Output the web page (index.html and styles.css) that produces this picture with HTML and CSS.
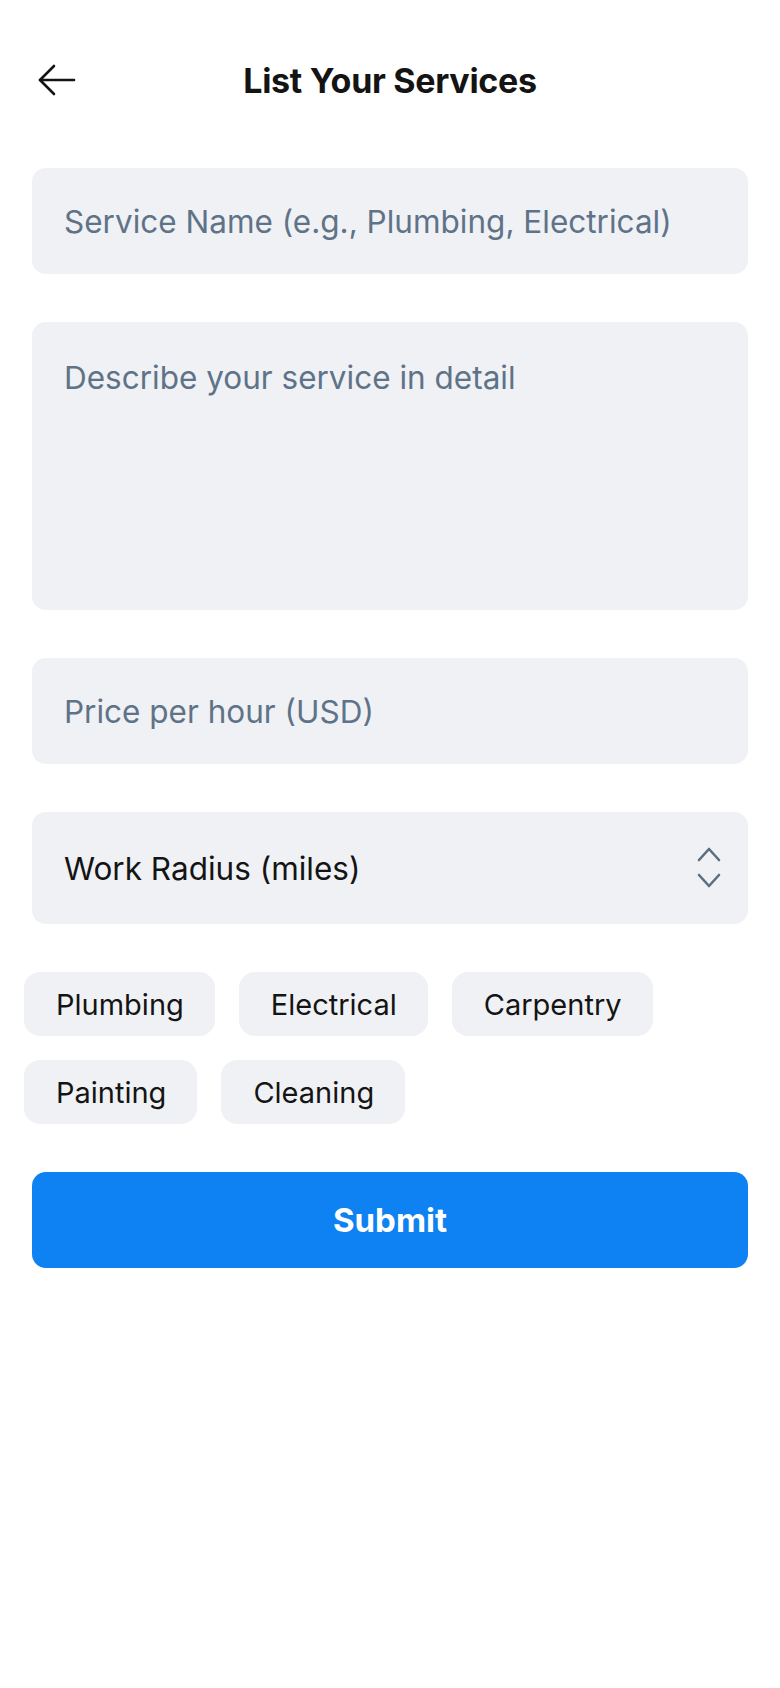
FILE: index.html
```html
<!DOCTYPE html>
<html lang="en">
<head>
<meta charset="utf-8">
<title>List Your Services</title>
<link rel="stylesheet" href="styles.css">
</head>
<body>
<div class="screen">
  <header class="header">
    <button class="back" aria-label="Back">
      <svg width="38" height="32" viewBox="0 0 38 32" fill="none" stroke="#141414" stroke-width="2.6" stroke-linecap="round" stroke-linejoin="round">
        <path d="M36 16H2"/>
        <path d="M16 2L2 16l14 14"/>
      </svg>
    </button>
    <h1 class="title">List Your Services</h1>
    <span class="spacer"></span>
  </header>

  <form class="form">
    <div class="field"><span class="placeholder">Service Name (e.g., Plumbing, Electrical)</span></div>
    <div class="field area"><span class="placeholder">Describe your service in detail</span></div>
    <div class="field"><span class="placeholder">Price per hour (USD)</span></div>
    <div class="field select">
      <span class="value">Work Radius (miles)</span>
      <svg class="chev" width="24" height="44" viewBox="0 0 24 44" fill="none" stroke="#5b6f84" stroke-width="2.6" stroke-linecap="round" stroke-linejoin="round">
        <path d="M2 14L12 3l10 11"/>
        <path d="M2 29l10 11 10-11"/>
      </svg>
    </div>

    <div class="chips">
      <span class="chip">Plumbing</span>
      <span class="chip">Electrical</span>
      <span class="chip">Carpentry</span>
      <span class="chip">Painting</span>
      <span class="chip">Cleaning</span>
    </div>

    <button type="button" class="submit">Submit</button>
  </form>
</div>
</body>
</html>
```

FILE: styles.css
```css
* { box-sizing: border-box; }
html, body { margin: 0; padding: 0; background: #ffffff; }
body {
  font-family: Inter, "Noto Sans", "Liberation Sans", sans-serif;
  color: #141414;
}
.screen {
  width: 780px;
  min-height: 1688px;
  padding: 0 32px;
}
.header {
  height: 160px;
  display: flex;
  align-items: center;
  justify-content: space-between;
}
.back {
  width: 42px;
  height: 40px;
  border: 0;
  background: none;
  padding: 0;
  margin-left: 6px;
  display: flex;
  align-items: center;
}
.spacer { width: 48px; }
.title {
  margin: 0;
  font-size: 34px;
  font-weight: 700;
  letter-spacing: -0.3px;
  color: #141414;
}
.form {
  display: flex;
  flex-direction: column;
  gap: 48px;
  margin-top: 8px;
}
.field {
  background: #f0f1f5;
  border-radius: 14px;
  height: 106px;
  padding: 0 32px;
  display: flex;
  align-items: center;
}
.placeholder {
  font-size: 31.5px;
  color: #5f7388;
}
.area {
  height: 288px;
  align-items: flex-start;
  padding-top: 36px;
}
.select {
  height: 112px;
  justify-content: space-between;
}
.value {
  font-size: 31.5px;
  color: #141414;
}
.chev { margin-right: -5px; }
.chips {
  display: flex;
  flex-wrap: wrap;
  gap: 24px;
  margin: 0 -8px;
}
.chip {
  background: #f0f1f5;
  border-radius: 16px;
  height: 64px;
  padding: 0 31px 0 32px;
  display: flex;
  align-items: center;
  font-size: 29px;
  color: #141414;
}
.submit {
  height: 96px;
  border: 0;
  border-radius: 14px;
  background: #0e82f2;
  color: #ffffff;
  font-family: Inter, "Noto Sans", sans-serif;
  font-size: 33px;
  font-weight: 700;
}
```
